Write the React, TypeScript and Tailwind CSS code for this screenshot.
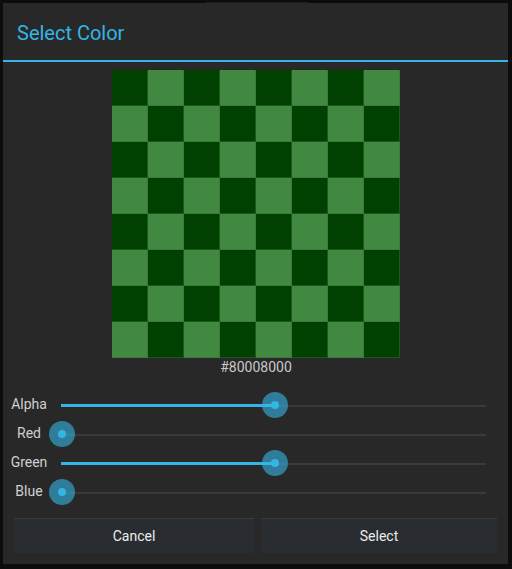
import React from "react";

const FONT = { fontFamily: "Roboto, 'Noto Sans', sans-serif" };

function Checker() {
  const cells: React.ReactNode[] = [];
  for (let r = 0; r < 8; r++) {
    for (let c = 0; c < 8; c++) {
      const dark = (r + c) % 2 === 0;
      cells.push(
        <div
          key={`${r}-${c}`}
          className={
            dark
              ? "w-[36px] h-[36px] bg-[#004000] border-r border-b border-[#1c571c]"
              : "w-[36px] h-[36px] bg-[#418841] border-r border-b border-[#3a7a3a]"
          }
        />
      );
    }
  }
  return <div className="grid grid-cols-[repeat(8,36px)] w-[288px] h-[288px]">{cells}</div>;
}

function SliderRow({ label, value }: { label: string; value: number }) {
  const pct = value / 255;
  return (
    <div className="flex items-center h-[29px]">
      <div className="w-[40px] text-center text-[14px] text-[#d0d0d0] leading-none ml-[6px] mb-[4px]">{label}</div>
      <div className="relative w-[451px] h-[29px] ml-[-1px]">
        <div className="absolute left-[13px] right-[13px] top-[14px] h-[2px] bg-[#3a3a3a]" />
        <div
          className="absolute left-[13px] top-[13px] h-[3px] bg-[#33b5e5]"
          style={{ width: `${pct * 425}px` }}
        />
        <div
          className="absolute top-[1px] w-[26px] h-[26px] rounded-full bg-[#33b5e5]/60 flex items-center justify-center"
          style={{ left: `${pct * 425 + 1}px` }}
        >
          <div className="w-[8px] h-[8px] rounded-full bg-[#33b5e5]" />
        </div>
      </div>
    </div>
  );
}

export default function App() {
  return (
    <div className="w-[512px] h-[569px] bg-[#0c0c0c] flex flex-col" style={FONT}>
      <div className="h-[3px] flex justify-center">
        <div className="mt-[2px] w-[103px] h-[1px] bg-[#1e1e1e] ml-[2px]" />
      </div>
      <div className="ml-[3px] w-[505px] h-[561px] bg-[#282828] flex flex-col">
        <div className="h-[57px] flex items-center pl-[14px]">
          <span className="text-[20px] text-[#33b5e5] leading-none mt-[2px]">Select Color</span>
        </div>
        <div className="h-[2px] bg-[#33b5e5]" />
        <div className="flex justify-center mt-[8px] pl-[1px]">
          <Checker />
        </div>
        <div className="text-center text-[14px] text-[#c8c8c8] leading-[18px] pl-[1px]">#80008000</div>
        <div className="mt-[15px] flex flex-col">
          <SliderRow label="Alpha" value={128} />
          <SliderRow label="Red" value={0} />
          <SliderRow label="Green" value={128} />
          <SliderRow label="Blue" value={0} />
        </div>
        <div className="flex mt-[11px] pl-[11px] gap-[7px]">
          <div className="w-[240px] h-[35px] bg-[#292d31] border-t border-[#363b40] flex items-center justify-center text-[14px] text-[#ececec]">
            Cancel
          </div>
          <div className="w-[236px] h-[35px] bg-[#292d31] border-t border-[#363b40] flex items-center justify-center text-[14px] text-[#ececec]">
            Select
          </div>
        </div>
      </div>
    </div>
  );
}
